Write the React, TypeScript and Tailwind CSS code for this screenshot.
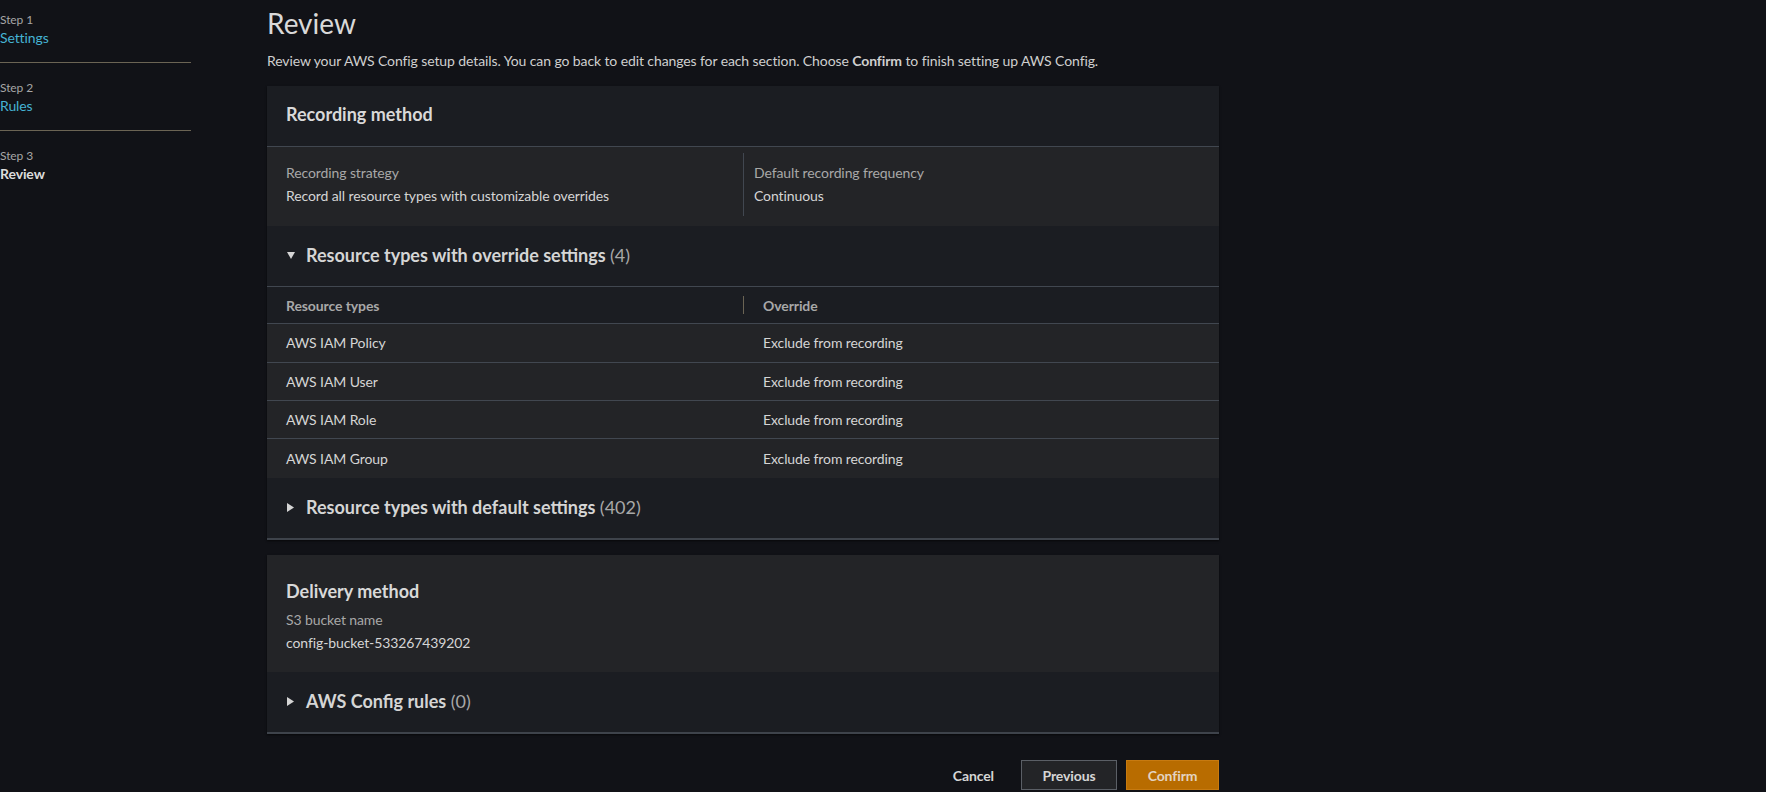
import { FC, ReactNode } from "react";

const font = { fontFamily: "Lato, 'Liberation Sans', sans-serif" };

const steps = [
  { step: "Step 1", label: "Settings", active: false },
  { step: "Step 2", label: "Rules", active: false },
  { step: "Step 3", label: "Review", active: true },
];

const overrides = ["AWS IAM Policy", "AWS IAM User", "AWS IAM Role", "AWS IAM Group"];

const Caret: FC<{ open?: boolean }> = ({ open }) => (
  <div className="w-[9px] shrink-0 flex items-center text-[#d5d5d5]">
    {open ? (
      <svg width="8" height="7" viewBox="0 0 8 7">
        <path d="M0 0h8L4 7z" fill="currentColor" />
      </svg>
    ) : (
      <svg width="7" height="9" viewBox="0 0 7 9">
        <path d="M0 0l7 4.5L0 9z" fill="currentColor" />
      </svg>
    )}
  </div>
);

const Expander: FC<{ title: string; count: number; open?: boolean; last?: boolean }> = ({ title, count, open, last }) => (
  <div className={`flex items-center pl-[20px] gap-[10px] pb-[2px] ${last ? "h-[60px]" : "h-[61px] border-b border-[#414750]"}`}>
    <Caret open={open} />
    <div className="text-[18px] font-bold tracking-normal text-[#d5d5d5]">
      {title} <span className="font-normal text-[#a8a8a8]">({count})</span>
    </div>
  </div>
);

const Card: FC<{ children: ReactNode }> = ({ children }) => (
  <div className="bg-[#1b1d22] border-b-2 border-[#3e434b] shadow-[0_1px_2px_rgba(0,0,0,0.6)]">{children}</div>
);

const App: FC = () => {
  return (
    <div className="min-h-[792px] w-full bg-[#111217] flex text-[14px] tracking-[-0.1px] text-[#d5d5d5]" style={font}>
      <div className="w-[191px] shrink-0 pt-3">
        {steps.map((s, i) => (
          <div key={s.step} className={`${i > 0 ? "pt-[17px]" : ""} ${i < 2 ? "pb-[14px] border-b border-[#6b6454]" : ""}`}>
            <div className="text-[12px] leading-4 text-[#a6a6a6]">{s.step}</div>
            <div className={`leading-5 ${s.active ? "font-bold text-[#dcdcdc]" : "text-[#45b3d3]"}`}>{s.label}</div>
          </div>
        ))}
      </div>

      <div className="ml-[76px] w-[952px] pt-[5px]">
        <h1 className="text-[28px] leading-9 tracking-normal text-[#d9d9d9]">Review</h1>
        <p className="mt-[10px] leading-5 text-[#cfcfcf]">
          Review your AWS Config setup details. You can go back to edit changes for each section. Choose{" "}
          <span className="font-bold">Confirm</span> to finish setting up AWS Config.
        </p>

        <div className="mt-[15px]">
          <Card>
            <div className="h-[61px] flex items-center px-[19px] pb-[3px] border-b border-[#414750]">
              <h2 className="text-[18px] font-bold tracking-normal text-[#d9d9d9]">Recording method</h2>
            </div>
            <div className="bg-[#232427] grid grid-cols-2 pt-[6px] pb-[10px]">
              <div className="pl-[19px] pt-[10px] pb-[10px] flex flex-col gap-[3px]">
                <div className="leading-5 text-[#a8a8a8]">Recording strategy</div>
                <div className="leading-5">Record all resource types with customizable overrides</div>
              </div>
              <div className="border-l border-[#414750] pl-[10px] pt-[10px] pb-[10px] flex flex-col gap-[3px]">
                <div className="leading-5 text-[#a8a8a8]">Default recording frequency</div>
                <div className="leading-5">Continuous</div>
              </div>
            </div>

            <Expander title="Resource types with override settings" count={4} open />
            <div className="grid grid-cols-2 h-[37px] items-center border-b border-[#414750] font-bold text-[#a8a8a8]">
              <div className="pl-[19px]">Resource types</div>
              <div className="flex items-center h-full">
                <div className="h-[18px] border-l border-[#6b6454]" />
                <div className="pl-[19px]">Override</div>
              </div>
            </div>
            <div className="bg-[#232427]">
              {overrides.map((r, i) => (
                <div
                  key={r}
                  className={`grid grid-cols-2 items-center pb-[1px] ${i === 0 || i === overrides.length - 1 ? "h-[39px]" : "h-[38px]"} ${
                    i < overrides.length - 1 ? "border-b border-[#414750]" : ""
                  }`}
                >
                  <div className="pl-[19px]">{r}</div>
                  <div className="pl-[20px]">Exclude from recording</div>
                </div>
              ))}
            </div>
            <Expander title="Resource types with default settings" count={402} last />
          </Card>
        </div>

        <div className="mt-[15px]">
          <Card>
            <div className="bg-[#232427] px-[19px] pt-[24px] pb-[19px]">
              <h2 className="text-[18px] leading-6 font-bold tracking-normal text-[#d9d9d9]">Delivery method</h2>
              <div className="mt-[7px] leading-5 text-[#a8a8a8]">S3 bucket name</div>
              <div className="mt-[3px] leading-5">config-bucket-533267439202</div>
            </div>
            <Expander title="AWS Config rules" count={0} last />
          </Card>
        </div>

        <div className="mt-[26px] flex justify-end items-center gap-[9px]">
          <button className="px-[18px] h-[30px] font-bold text-[#d5d5d5]">Cancel</button>
          <button className="w-[96px] h-[30px] border border-[#5b5f66] bg-[#232427] font-bold text-[#d5d5d5]">Previous</button>
          <button className="w-[93px] h-[30px] bg-[#b86c00] border border-[#c77a10] font-bold text-[#e3d3c2]">Confirm</button>
        </div>
      </div>
    </div>
  );
};

export default App;
